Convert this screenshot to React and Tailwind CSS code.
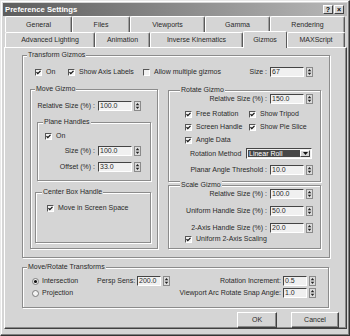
import React from "react";

const FONT = "font-['Liberation_Sans',Arial,sans-serif]";

function Check({ checked = true }) {
  return (
    <span className="w-[7px] h-[7px] shrink-0 bg-[#f2f2f2] border border-t-[#555555] border-l-[#555555] border-b-[#ffffff] border-r-[#ffffff] flex items-center justify-center">
      {checked && (
        <svg width="5" height="5" viewBox="0 0 5 5" className="block">
          <path d="M0.5 2.2 L1.8 3.7 L4.5 0.8" fill="none" stroke="#111" strokeWidth="1.2" />
        </svg>
      )}
    </span>
  );
}

function CheckLabel({ children, className = "" }) {
  return (
    <div className={`flex items-center gap-[4px] whitespace-nowrap ${className}`}>
      <Check />
      <span>{children}</span>
    </div>
  );
}

function Radio({ on }) {
  return (
    <svg width="7" height="7" viewBox="0 0 7 7" className="block shrink-0">
      <circle cx="3.5" cy="3.5" r="3" fill="#f2f2f2" stroke="#707070" strokeWidth="0.9" />
      {on && <circle cx="3.5" cy="3.5" r="1.6" fill="#111" />}
    </svg>
  );
}

function Spin({ value, narrow = false }) {
  return (
    <div className="flex items-center shrink-0">
      <div
        className={`${narrow ? "w-[24px]" : "w-[34px]"} h-[10px] bg-[#f0f0f0] border border-t-[#444444] border-l-[#444444] border-b-[#ffffff] border-r-[#ffffff] leading-[8px] pl-[1px]`}
      >
        {value}
      </div>
      <svg width="7" height="10" viewBox="0 0 7 10" className="ml-[2px] block">
        <rect x="0.5" y="0.5" width="6" height="9" fill="#dcdcdc" stroke="#8a8a8a" strokeWidth="1" />
        <path d="M3.5 2 L5.3 4.2 H1.7 Z" fill="#222" />
        <path d="M3.5 8 L5.3 5.8 H1.7 Z" fill="#222" />
      </svg>
    </div>
  );
}

function SpinRow({ label, value, className = "" }) {
  return (
    <div className={`flex items-center justify-end h-[10px] ${className}`}>
      <span className="mr-[3px] whitespace-nowrap">{label}</span>
      <Spin value={value} />
    </div>
  );
}

function Group({ label, className = "", labelClass = "ml-[4px]", children }) {
  return (
    <div
      className={`border border-[#8c8c8c] shadow-[inset_1px_1px_0_#ffffff,1px_1px_0_#ffffff] flex flex-col shrink-0 ${className}`}
    >
      <div className={`-mt-[5px] ${labelClass} px-[1px] bg-[#d5d5d5] w-fit h-[8px] leading-[8px] whitespace-nowrap`}>
        {label}
      </div>
      {children}
    </div>
  );
}

function Tab({ w, children }) {
  return (
    <div
      className={`${w} h-full flex items-center justify-center border-t border-l border-r border-t-[#ffffff] border-l-[#ffffff] border-r-[#5a5a5a] rounded-t-[2px] shadow-[inset_-1px_0_0_#a0a0a0] whitespace-nowrap`}
    >
      {children}
    </div>
  );
}

function TitleBtn({ children }) {
  return (
    <div className="w-[10px] h-[9px] bg-[#d5d5d5] border border-t-[#ffffff] border-l-[#ffffff] border-b-[#404040] border-r-[#404040] flex items-center justify-center text-[7px] leading-[7px] font-bold text-black">
      {children}
    </div>
  );
}

function Button({ w, children }) {
  return (
    <div
      className={`${w} h-[16px] border border-t-[#ffffff] border-l-[#ffffff] border-b-[#404040] border-r-[#404040] shadow-[inset_-1px_-1px_0_#8a8a8a] flex items-center justify-center`}
    >
      {children}
    </div>
  );
}

export default function App() {
  return (
    <div
      className={`w-[350px] h-[336px] bg-[#d5d5d5] ${FONT} text-[7px] leading-[8px] text-[#2a2a2a] border border-t-[#e8e8e8] border-l-[#e8e8e8] border-r-[#333333] border-b-[#333333] shadow-[inset_-1px_-1px_0_#808080,inset_1px_1px_0_#ffffff] p-[2px] flex flex-col overflow-hidden`}
    >
      {/* Title bar */}
      <div className="h-[13px] shrink-0 bg-gradient-to-r from-[#5e5e5e] to-[#b8b8b8] flex items-center pl-[2px] pr-[3px]">
        <span className="text-white font-bold text-[7.7px] leading-[9px]">Preference Settings</span>
        <div className="ml-auto flex gap-[1px]">
          <TitleBtn>?</TitleBtn>
          <TitleBtn>×</TitleBtn>
        </div>
      </div>

      {/* Tabs row 1 */}
      <div className="h-[16px] shrink-0 flex ml-[2px]">
        <Tab w="w-[67px]">General</Tab>
        <Tab w="w-[58px]">Files</Tab>
        <Tab w="w-[75px]">Viewports</Tab>
        <Tab w="w-[65px]">Gamma</Tab>
        <Tab w="w-[75px]">Rendering</Tab>
      </div>
      {/* Tabs row 2 */}
      <div className="h-[15px] shrink-0 flex items-end ml-[2px]">
        <Tab w="w-[90px]">Advanced Lighting</Tab>
        <Tab w="w-[55px]">Animation</Tab>
        <Tab w="w-[93px]">Inverse Kinematics</Tab>
        <div className="relative z-10 w-[44px] h-[17px] -mb-[1px] bg-[#d5d5d5] flex items-center justify-center border-t border-l border-r border-t-[#ffffff] border-l-[#ffffff] border-r-[#5a5a5a] rounded-t-[2px]">
          Gizmos
        </div>
        <Tab w="w-[58px]">MAXScript</Tab>
      </div>

      {/* Panel */}
      <div className="ml-[1px] w-[343px] h-[282px] shrink-0 border border-t-[#ffffff] border-l-[#ffffff] border-r-[#404040] border-b-[#404040] shadow-[inset_-1px_-1px_0_#8a8a8a] flex flex-col">
        {/* Transform Gizmos */}
        <Group label="Transform Gizmos" className="ml-[17px] mt-[7px] w-[308px] h-[203px]">
          <div className="mt-[8px] h-[10px] flex items-center pl-[12px] pr-[16px]">
            <CheckLabel className="w-[33px]">On</CheckLabel>
            <CheckLabel className="w-[75px]">Show Axis Labels</CheckLabel>
            <div className="flex items-center gap-[4px] whitespace-nowrap">
              <Check checked={false} />
              <span>Allow multiple gizmos</span>
            </div>
            <div className="ml-auto flex items-center">
              <span className="mr-[3px]">Size :</span>
              <Spin value="67" />
            </div>
          </div>

          <div className="mt-[12px] flex items-start">
            {/* Move Gizmo */}
            <Group label="Move Gizmo" className="ml-[7px] w-[128px] h-[160px]">
              <SpinRow label="Relative Size (%) :" value="100.0" className="mt-[8px] pr-[16px]" />
              <Group label="Plane Handles" labelClass="ml-[5px]" className="ml-[6px] mt-[11px] w-[114px] h-[59px]">
                <CheckLabel className="mt-[5px] h-[10px] pl-[7px]">On</CheckLabel>
                <SpinRow label="Size (%) :" value="100.0" className="mt-[5px] pr-[9px]" />
                <SpinRow label="Offset (%) :" value="33.0" className="mt-[6px] pr-[9px]" />
              </Group>
              <Group label="Center Box Handle" labelClass="ml-[6px]" className="ml-[4px] mt-[11px] w-[116px] h-[51px]">
                <CheckLabel className="mt-[7px] h-[10px] pl-[11px]">Move in Screen Space</CheckLabel>
              </Group>
            </Group>

            {/* Right column */}
            <div className="ml-[10px] mt-[1px] w-[153px] flex flex-col">
              <Group label="Rotate Gizmo" labelClass="ml-[11px]" className="w-[153px] h-[92px]">
                <SpinRow label="Relative Size (%) :" value="150.0" className="pr-[7px]" />
                <div className="mt-[5px] h-[10px] flex items-center pl-[16px]">
                  <CheckLabel className="w-[64px]">Free Rotation</CheckLabel>
                  <CheckLabel>Show Tripod</CheckLabel>
                </div>
                <div className="mt-[3px] h-[10px] flex items-center pl-[16px]">
                  <CheckLabel className="w-[64px]">Screen Handle</CheckLabel>
                  <CheckLabel>Show Pie Slice</CheckLabel>
                </div>
                <CheckLabel className="mt-[3px] h-[10px] pl-[16px]">Angle Data</CheckLabel>
                <div className="mt-[3px] h-[11px] flex items-center pl-[21px]">
                  <span className="w-[56px] whitespace-nowrap">Rotation Method</span>
                  <div className="w-[66px] h-[11px] flex border border-t-[#444444] border-l-[#444444] border-b-[#ffffff] border-r-[#ffffff] bg-[#f0f0f0] p-[1px]">
                    <div className="flex-1 bg-[#474747] text-white leading-[7px] pl-[1px] whitespace-nowrap">Linear Roll</div>
                    <div className="w-[10px] h-full bg-[#d5d5d5] border border-t-[#ffffff] border-l-[#ffffff] border-b-[#404040] border-r-[#404040] flex items-center justify-center">
                      <svg width="5" height="3" viewBox="0 0 5 3" className="block">
                        <path d="M0 0 H5 L2.5 3 Z" fill="#111" />
                      </svg>
                    </div>
                  </div>
                </div>
                <SpinRow label="Planar Angle Threshold :" value="10.0" className="mt-[6px] pr-[7px]" />
              </Group>

              <Group label="Scale Gizmo" labelClass="ml-[11px]" className="mt-[3px] w-[153px] h-[64px]">
                <SpinRow label="Relative Size (%) :" value="100.0" className="pr-[7px]" />
                <SpinRow label="Uniform Handle Size (%) :" value="50.0" className="mt-[7px] pr-[7px]" />
                <SpinRow label="2-Axis Handle Size (%) :" value="20.0" className="mt-[7px] pr-[7px]" />
                <CheckLabel className="mt-[1px] h-[10px] pl-[16px]">Uniform 2-Axis Scaling</CheckLabel>
              </Group>
            </div>
          </div>
        </Group>

        {/* Move/Rotate Transforms */}
        <Group label="Move/Rotate Transforms" className="ml-[17px] mt-[9px] w-[307px] h-[41px]">
          <div className="mt-[5px] h-[10px] flex items-center pl-[9px] pr-[12px]">
            <div className="w-[65px] flex items-center gap-[3px]">
              <Radio on />
              <span>Intersection</span>
            </div>
            <span className="w-[40px] whitespace-nowrap">Persp Sens:</span>
            <Spin value="200.0" narrow />
            <div className="ml-auto flex items-center">
              <span className="mr-[2px] whitespace-nowrap">Rotation Increment:</span>
              <Spin value="0.5" narrow />
            </div>
          </div>
          <div className="mt-[2px] h-[10px] flex items-center pl-[9px] pr-[12px]">
            <div className="w-[65px] flex items-center gap-[3px]">
              <Radio />
              <span>Projection</span>
            </div>
            <div className="ml-auto flex items-center">
              <span className="mr-[2px] whitespace-nowrap">Viewport Arc Rotate Snap Angle:</span>
              <Spin value="1.0" narrow />
            </div>
          </div>
        </Group>

        {/* Buttons */}
        <div className="mt-[4px] flex justify-end pr-[7px] gap-[14px]">
          <Button w="w-[40px]">OK</Button>
          <Button w="w-[48px]">Cancel</Button>
        </div>
      </div>
    </div>
  );
}
